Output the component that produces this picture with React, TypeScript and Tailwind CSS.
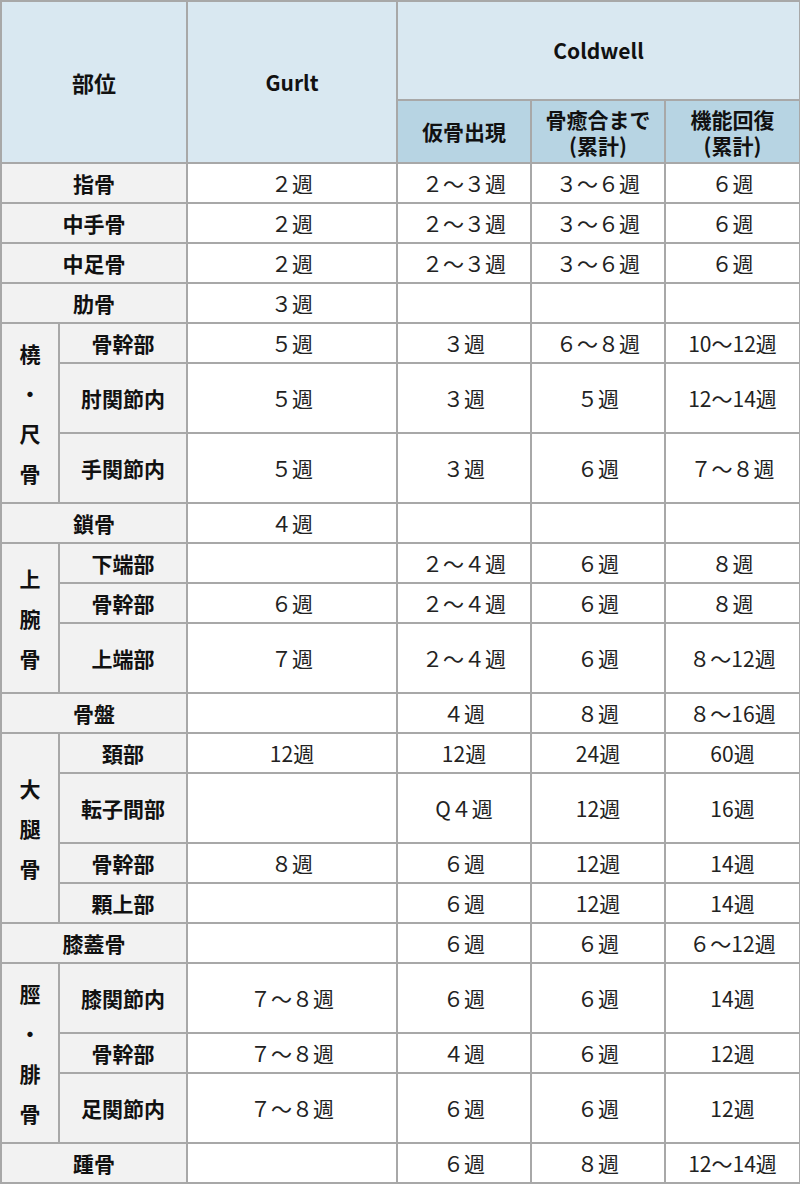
import React from 'react';

type Row = {
  group?: { label: string[]; span: number };
  name: string;
  full?: boolean;
  tall?: boolean;
  gurlt: string;
  callus: string;
  union: string;
  recovery: string;
};

const rows: Row[] = [
  { name: '指骨', full: true, gurlt: '２週', callus: '２～３週', union: '３～６週', recovery: '６週' },
  { name: '中手骨', full: true, gurlt: '２週', callus: '２～３週', union: '３～６週', recovery: '６週' },
  { name: '中足骨', full: true, gurlt: '２週', callus: '２～３週', union: '３～６週', recovery: '６週' },
  { name: '肋骨', full: true, gurlt: '３週', callus: '', union: '', recovery: '' },
  { group: { label: ['橈', '・', '尺', '骨'], span: 3 }, name: '骨幹部', gurlt: '５週', callus: '３週', union: '６～８週', recovery: '10～12週' },
  { name: '肘関節内', tall: true, gurlt: '５週', callus: '３週', union: '５週', recovery: '12～14週' },
  { name: '手関節内', tall: true, gurlt: '５週', callus: '３週', union: '６週', recovery: '７～８週' },
  { name: '鎖骨', full: true, gurlt: '４週', callus: '', union: '', recovery: '' },
  { group: { label: ['上', '腕', '骨'], span: 3 }, name: '下端部', gurlt: '', callus: '２～４週', union: '６週', recovery: '８週' },
  { name: '骨幹部', gurlt: '６週', callus: '２～４週', union: '６週', recovery: '８週' },
  { name: '上端部', tall: true, gurlt: '７週', callus: '２～４週', union: '６週', recovery: '８～12週' },
  { name: '骨盤', full: true, gurlt: '', callus: '４週', union: '８週', recovery: '８～16週' },
  { group: { label: ['大', '腿', '骨'], span: 4 }, name: '頚部', gurlt: '12週', callus: '12週', union: '24週', recovery: '60週' },
  { name: '転子間部', tall: true, gurlt: '', callus: 'Q４週', union: '12週', recovery: '16週' },
  { name: '骨幹部', gurlt: '８週', callus: '６週', union: '12週', recovery: '14週' },
  { name: '顆上部', gurlt: '', callus: '６週', union: '12週', recovery: '14週' },
  { name: '膝蓋骨', full: true, gurlt: '', callus: '６週', union: '６週', recovery: '６～12週' },
  { group: { label: ['脛', '・', '腓', '骨'], span: 3 }, name: '膝関節内', tall: true, gurlt: '７～８週', callus: '６週', union: '６週', recovery: '14週' },
  { name: '骨幹部', gurlt: '７～８週', callus: '４週', union: '６週', recovery: '12週' },
  { name: '足関節内', tall: true, gurlt: '７～８週', callus: '６週', union: '６週', recovery: '12週' },
  { name: '踵骨', full: true, gurlt: '', callus: '６週', union: '８週', recovery: '12～14週' },
];

const cell = 'border-2 border-[#a8a8a8] text-center align-middle p-0';
const label = `${cell} bg-[#f2f2f2] font-bold text-[21px] text-[#111]`;
const data = `${cell} bg-white text-[21px] text-[#222]`;
const sub = `${cell} bg-[#b7d4e3] font-bold text-[21px] text-[#111]`;

export default function App() {
  return (
    <div className="w-[800px] bg-white" style={{ fontFamily: '"Noto Sans CJK JP", "Noto Sans", sans-serif' }}>
      <table className="w-[799px] table-fixed border-collapse leading-none">
        <colgroup>
          <col className="w-[58px]" />
          <col className="w-[128px]" />
          <col className="w-[210px]" />
          <col className="w-[134px]" />
          <col className="w-[134px]" />
          <col className="w-[135px]" />
        </colgroup>
        <thead>
          <tr className="h-[99px]">
            <th colSpan={2} rowSpan={2} className={`${cell} bg-[#d9e8f1] font-bold text-[22px] text-[#111]`}>部位</th>
            <th rowSpan={2} className={`${cell} bg-[#d9e8f1] font-bold text-[21px] text-[#111]`}>Gurlt</th>
            <th colSpan={3} className={`${cell} bg-[#d9e8f1] font-bold text-[21px] text-[#111]`}>Coldwell</th>
          </tr>
          <tr className="h-[63px]">
            <th className={sub}>仮骨出現</th>
            <th className={sub}>
              <div className="flex flex-col items-center leading-[26px]">
                <span>骨癒合まで</span>
                <span>(累計)</span>
              </div>
            </th>
            <th className={sub}>
              <div className="flex flex-col items-center leading-[26px]">
                <span>機能回復</span>
                <span>(累計)</span>
              </div>
            </th>
          </tr>
        </thead>
        <tbody>
          {rows.map((r, i) => (
            <tr key={i} className={r.tall ? 'h-[70px]' : 'h-[40px]'}>
              {r.group && (
                <td rowSpan={r.group.span} className={label}>
                  <div className="flex flex-col items-center">
                    {r.group.label.map((ch, j) => (
                      <span key={j} className="h-[40px] leading-[40px]">{ch}</span>
                    ))}
                  </div>
                </td>
              )}
              <td colSpan={r.full ? 2 : 1} className={label}>{r.name}</td>
              <td className={data}>{r.gurlt}</td>
              <td className={data}>{r.callus}</td>
              <td className={data}>{r.union}</td>
              <td className={data}>{r.recovery}</td>
            </tr>
          ))}
        </tbody>
      </table>
    </div>
  );
}
